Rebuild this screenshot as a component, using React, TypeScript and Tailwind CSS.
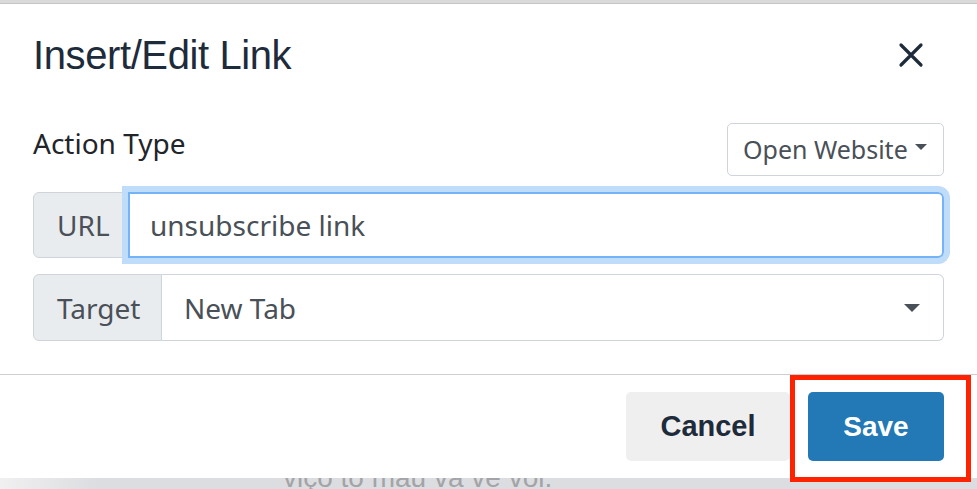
import { useState } from "react";

function Caret({ className }: { className: string }) {
  return (
    <svg viewBox="0 0 10 5" className={className} fill="currentColor">
      <path d="M0 0h10L5 5z" />
    </svg>
  );
}

export default function App() {
  let [url, setUrl] = useState("unsubscribe link");

  return (
    <div className="relative w-[977px] h-[489px] overflow-hidden bg-[#dcdde0] flex flex-col font-['Noto_Sans',sans-serif]">
      <div className="h-[4px] bg-[#dadada] border-b border-[#c9c9c9]" />

      <div className="bg-white flex flex-col shadow-[0_1px_2px_rgba(0,0,0,0.25)]">
        {/* header */}
        <div className="flex items-center justify-between px-[33px] pt-[28px] pb-[20px]">
          <h2 className="font-['Liberation_Sans',sans-serif] text-[40px] leading-[46px] text-[#1e2b3a] tracking-[-0.4px]">
            Insert/Edit Link
          </h2>
          <button className="mr-[20px] text-[#1e2b3a]">
            <svg viewBox="0 0 26 26" className="w-[26px] h-[26px]" stroke="currentColor" strokeWidth="3.2" strokeLinecap="round">
              <path d="M3 3l20 20M23 3L3 23" />
            </svg>
          </button>
        </div>

        {/* body */}
        <div className="px-[33px] pt-[25px] pb-[33px] flex flex-col">
          <div className="flex items-center justify-between">
            <span className="text-[28px] text-[#212529] -mt-[14px]">Action Type</span>
            <button className="h-[53px] w-[217px] border border-[#ced4da] rounded-[5px] flex items-center pl-[15px] gap-[7px] text-[25px] text-[#495057]">
              Open Website
              <Caret className="w-[12px] h-[6px] text-[#495057] -mt-[6px]" />
            </button>
          </div>

          <div className="flex h-[66px] mt-[16px]">
            <div className="w-[95px] shrink-0 bg-[#e9ecef] border border-[#ced4da] rounded-l-[6px] flex items-center pl-[23px] text-[28px] text-[#495057]">
              URL
            </div>
            <input
              value={url}
              onChange={(e) => setUrl(e.target.value)}
              className="flex-1 min-w-0 border-2 border-[#74b3f7] rounded-r-[6px] pl-[20px] text-[28px] text-[#495057] outline-none shadow-[0_0_0_6px_#bfdcfb]"
            />
          </div>

          <div className="flex h-[67px] mt-[16px]">
            <div className="w-[129px] shrink-0 bg-[#e9ecef] border border-[#ced4da] rounded-l-[6px] flex items-center pl-[23px] text-[28px] text-[#495057]">
              Target
            </div>
            <div className="flex-1 border border-l-0 border-[#ced4da] rounded-r-[6px] flex items-center justify-between pl-[22px] pr-[23px] text-[28px] text-[#495057]">
              New Tab
              <Caret className="w-[16px] h-[8px] text-[#495057]" />
            </div>
          </div>
        </div>

        {/* footer */}
        <div className="border-t border-[#cfcfcf] flex justify-end items-center gap-[18px] px-[33px] pt-[17px] pb-[17px]">
          <button className="h-[69px] w-[164px] rounded-[5px] bg-[#efefef] text-[#1e2b3a] font-['Liberation_Sans',sans-serif] font-bold text-[29px]">
            Cancel
          </button>
          <button className="h-[69px] w-[136px] rounded-[5px] bg-[#2279b5] text-white font-['Liberation_Sans',sans-serif] font-bold text-[28px]">
            Save
          </button>
        </div>
      </div>

      <div className="h-[11px] overflow-hidden pl-[283px] bg-gradient-to-r from-[#f0f0f1] to-[#dcdde0] to-[10%]">
        <div className="-mt-[16px] text-[28px] leading-[32px] text-[#a3a4a7] font-['Liberation_Sans',sans-serif]">
          viço to mau va ve voi.
        </div>
      </div>

      {/* highlight annotation */}
      <div className="absolute left-[790px] top-[375px] w-[181px] h-[107px] border-[5px] border-[#ff2200]" />
    </div>
  );
}
